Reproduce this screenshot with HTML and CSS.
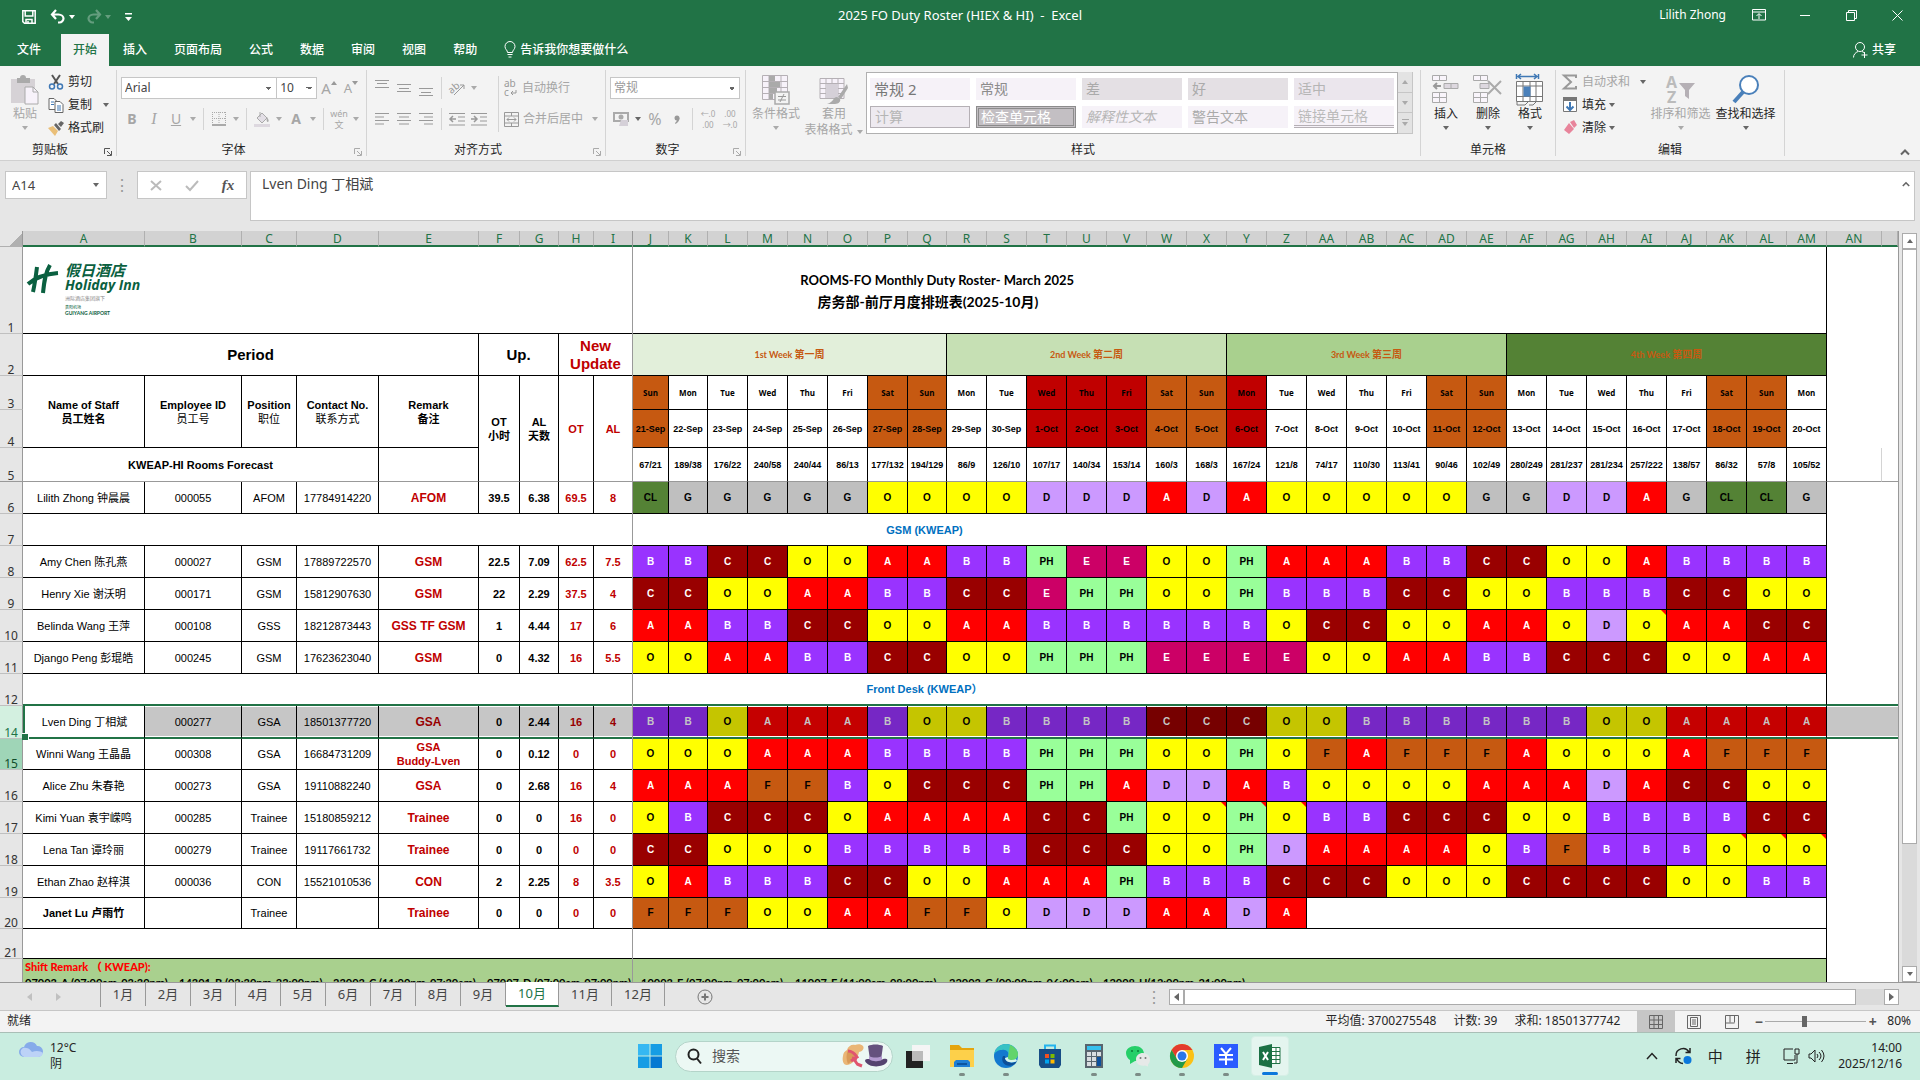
FILE: index.html
```html
<!DOCTYPE html>
<html lang="zh-CN">
<head>
    <meta charset="UTF-8">
    <meta name="viewport" content="width=device-width, initial-scale=1.0">
    <title>2025 FO Duty Roster (HIEX &amp; HI) - Excel</title>
    <link rel="stylesheet" href="styles.css">
</head>
<body>
    <header class="top">
        <div class="titlebar">
            <div class="quick">
                <button aria-label="保存"><svg width="14" height="14" viewBox="0 0 14 14"><path d="M.8.8h12.4v12.4H2.500L.8 11.600z M3.200 1v5h7.600V1 M4 13V9.500h6V13 M6 11v2" fill="none" stroke="#fff" stroke-width="1.500"/></svg></button>
                <button class="undo" aria-label="撤消"><svg width="16" height="14" viewBox="0 0 16 14"><path d="M6 0L2 4.500L6 9 M2.500 4.500h6c3 0 5 2 5 4s-2 4-4 4H8" fill="none" stroke="#fff" stroke-width="2.200"/></svg></button>
                <button class="drop light" aria-label="撤消选项"></button>
                <button class="undo faded" aria-label="恢复"><svg width="16" height="14" viewBox="0 0 16 14"><path d="M10 0l4 4.500L10 9 M13.500 4.500h-6c-3 0-5 2-5 4s2 4 4 4H8" fill="none" stroke="#fff" stroke-width="2.200"/></svg></button>
                <button class="drop light faded" aria-label="恢复选项"></button>
                <button class="more" aria-label="自定义"><svg width="7" height="8" viewBox="0 0 7 8"><path d="M0 0h7v1.500H0z M0 4h7L3.500 8z" fill="#fff"/></svg></button>
            </div>
            <h1>2025 FO Duty Roster (HIEX &amp; HI)&nbsp; -&nbsp; Excel</h1>
            <div class="window">
                <span class="user">Lilith Zhong</span>
                <button aria-label="功能区显示选项"><svg width="14" height="12" viewBox="0 0 14 12"><path d="M.5.5h13v10.500H.5z M.5 3h13 M7 10V5 M4.500 7L7 4.500L9.500 7" fill="none" stroke="#fff"/></svg></button>
                <button aria-label="最小化"><svg width="10" height="10" viewBox="0 0 10 10"><path d="M0 5.500h10" stroke="#fff"/></svg></button>
                <button aria-label="还原"><svg width="11" height="11" viewBox="0 0 11 11"><path d="M.5 2.500h8v8h-8z M2.500 2.500v-2h8v8h-2" fill="none" stroke="#fff"/></svg></button>
                <button aria-label="关闭"><svg width="11" height="11" viewBox="0 0 11 11"><path d="M.5.5l10 10 M10.500.5l-10 10" stroke="#fff"/></svg></button>
            </div>
        </div>
        <nav class="menu">
            <button class="file">文件</button>
            <button class="active">开始</button>
            <button>插入</button>
            <button>页面布局</button>
            <button>公式</button>
            <button>数据</button>
            <button>审阅</button>
            <button>视图</button>
            <button>帮助</button>
            <button class="tell"><svg width="12" height="17" viewBox="0 0 12 17"><path d="M3.500 11.500C3.500 9 1 8.500 1 5.500a5 5 0 0 1 10 0c0 3-2.500 3.500-2.500 6z M3.500 13.500h5 M4.500 16h3" fill="none" stroke="#fff"/></svg>告诉我你想要做什么</button>
            <button class="share"><svg width="15" height="16" viewBox="0 0 15 16"><circle cx="7" cy="5" r="4.500" fill="none" stroke="#fff"/><path d="M.5 15.500c0-3 2-5 4.500-6 M9 9.500l2 1 M11.500 10v6 M8.500 13h6" fill="none" stroke="#fff"/></svg>共享</button>
        </nav>
    </header>

    <section class="ribbon">
        <div class="group clipboard">
            <div class="tools">
                <button class="big off"><svg width="28" height="30" viewBox="0 0 28 30"><path d="M0 4h24v24H0z" fill="#d6d2d6"/><path d="M6 3h3a3 3 0 0 1 6 0h4v5H6z" fill="#aaa"/><path d="M14 12h8l5 5v12H14z" fill="#f7f2fa" stroke="#aaa"/><path d="M22 12v5h5" fill="none" stroke="#aaa"/></svg><span>粘贴</span><i class="drop"></i></button>
                <div class="stack">
                    <button><svg width="16" height="16" viewBox="0 0 16 16"><path d="M4 1l6 9 M12 1L6 10" stroke="#555" stroke-width="2"/><circle cx="4" cy="12.500" r="2.500" fill="none" stroke="#3f78b5" stroke-width="1.500"/><circle cx="12" cy="12.500" r="2.500" fill="none" stroke="#3f78b5" stroke-width="1.500"/></svg>剪切</button>
                    <button><svg width="16" height="16" viewBox="0 0 16 16"><path d="M1 1.500h5l3 3v8H1z" fill="#fff" stroke="#666"/><path d="M7 4.500h5l3 3v8H7z" fill="#fff" stroke="#666"/><path d="M3 5h3 M3 7.500h3 M9 9h4 M9 11h4 M9 13h4" stroke="#3f78b5"/></svg>复制<i class="drop dark"></i></button>
                    <button><svg width="16" height="16" viewBox="0 0 16 16"><path d="M0 8l5-2l5 5l-3 5z" fill="#eabf78"/><path d="M6 5l2-2l5 6l-2 2z M10 4l3-3l3 2l-3 4z" fill="#666"/></svg>格式刷</button>
                </div>
            </div>
            <p>剪贴板</p><svg class="launch on" width="8" height="8" viewBox="0 0 8 8"><path d="M.5 6V.5H6 M3 3l4 4 M7.500 3v4.500H3" fill="none" stroke="currentColor"/></svg>
        </div>

        <div class="group font">
            <div class="tools rows">
                <div class="line">
                    <select class="face" aria-label="字体"><option>Arial</option></select>
                    <select class="size" aria-label="字号"><option>10</option></select>
                    <button class="tool off up" aria-label="增大字号">A<svg width="6" height="4" viewBox="0 0 6 4"><path d="M0 4L3 0l3 4z" fill="#999"/></svg></button>
                    <button class="tool off down" aria-label="减小字号">A<svg width="6" height="4" viewBox="0 0 6 4"><path d="M0 0h6L3 4z" fill="#999"/></svg></button>
                </div>
                <div class="line">
                    <button class="tool off"><b>B</b></button>
                    <button class="tool off serif"><em>I</em></button>
                    <button class="tool off"><u>U</u></button><i class="drop"></i><i class="sep"></i>
                    <button class="tool off" aria-label="边框"><svg width="14" height="14" viewBox="0 0 14 14"><path d="M.5 0v13 M7 0v13 M13.500 0v13 M0 .5h14 M0 6.500h14" stroke="#aaa" stroke-dasharray="1 1"/><path d="M0 13h14" stroke="#aaa" stroke-width="2"/></svg></button><i class="drop"></i><i class="sep"></i>
                    <button class="tool off" aria-label="填充颜色"><svg width="16" height="16" viewBox="0 0 16 16"><path d="M6 1v5 M3 7l5-5l5 5l-5 5z" fill="#e3dfe6" stroke="#aaa"/><path d="M13 6c2 3 2 4 1 5c-1 0-2-1-1-5z" fill="#aaa"/><path d="M0 13h16v3H0z" fill="#ddd8df"/></svg></button><i class="drop"></i>
                    <button class="tool off"><b>A</b></button><i class="drop"></i><i class="sep"></i>
                    <button class="tool off pinyin">wén<br>文</button><i class="drop"></i>
                </div>
            </div>
            <p>字体</p><svg class="launch" width="8" height="8" viewBox="0 0 8 8"><path d="M.5 6V.5H6 M3 3l4 4 M7.500 3v4.500H3" fill="none" stroke="currentColor"/></svg>
        </div>

        <div class="group align">
            <div class="tools">
                <div class="rows">
                    <div class="line">
                        <button class="tool off" aria-label="顶端对齐"><svg width="14" height="16" viewBox="0 0 14 16"><path d="M0 .5h14 M2 3.500h10 M0 7.500h14" stroke="#999"/></svg></button>
                        <button class="tool off" aria-label="垂直居中"><svg width="14" height="16" viewBox="0 0 14 16"><path d="M0 4.500h14 M2 8.500h10 M0 11.500h14" stroke="#999"/></svg></button>
                        <button class="tool off" aria-label="底端对齐"><svg width="14" height="16" viewBox="0 0 14 16"><path d="M0 8.500h14 M2 12.500h10 M0 15.500h14" stroke="#999"/></svg></button>
                        <i class="sep"></i>
                        <button class="tool off" aria-label="方向"><svg width="18" height="16" viewBox="0 0 18 16"><text x="0" y="11" font-size="10" fill="#999" transform="rotate(-40 6 8)">ab</text><path d="M6 15L16 5 M12 5h4v4" fill="none" stroke="#999"/></svg></button><i class="drop"></i>
                    </div>
                    <div class="line">
                        <button class="tool off" aria-label="左对齐"><svg width="14" height="12" viewBox="0 0 14 12"><path d="M0 .5h14 M0 4h9 M0 7.500h14 M0 11h9" stroke="#999"/></svg></button>
                        <button class="tool off" aria-label="居中"><svg width="14" height="12" viewBox="0 0 14 12"><path d="M0 .5h14 M2 4h10 M0 7.500h14 M2 11h10" stroke="#999"/></svg></button>
                        <button class="tool off" aria-label="右对齐"><svg width="14" height="12" viewBox="0 0 14 12"><path d="M0 .5h14 M5 4h9 M0 7.500h14 M5 11h9" stroke="#999"/></svg></button>
                        <i class="sep"></i>
                        <button class="tool off" aria-label="减少缩进"><svg width="16" height="13" viewBox="0 0 16 13"><path d="M0 .5h16 M9 4h7 M9 8h7 M0 12h16" stroke="#999"/><path d="M7 6H1 M4 3L1 6l3 3" fill="none" stroke="#999" stroke-width="1.500"/></svg></button>
                        <button class="tool off" aria-label="增加缩进"><svg width="16" height="13" viewBox="0 0 16 13"><path d="M0 .5h16 M9 4h7 M9 8h7 M0 12h16" stroke="#999"/><path d="M0 6h6 M3 3l3 3l-3 3" fill="none" stroke="#999" stroke-width="1.500"/></svg></button>
                    </div>
                </div>
                <i class="sep tall"></i>
                <div class="rows">
                    <button class="label off"><svg width="14" height="18" viewBox="0 0 14 18"><text x="0" y="8" font-size="10" fill="#999">ab</text><text x="0" y="17" font-size="10" fill="#999">c</text><path d="M12 11v3H7 M9 12l-2 2l2 2" fill="none" stroke="#999"/></svg>自动换行</button>
                    <button class="label off"><svg width="15" height="15" viewBox="0 0 15 15"><path d="M.5.5h14v14H.5z M.5 4h14 M.5 11h14 M7.500.5V4 M7.500 11v3.500 M3 7.500h9 M5 5.500l-2 2l2 2 M10 5.500l2 2l-2 2" fill="none" stroke="#999"/></svg>合并后居中<i class="drop"></i></button>
                </div>
            </div>
            <p>对齐方式</p><svg class="launch" width="8" height="8" viewBox="0 0 8 8"><path d="M.5 6V.5H6 M3 3l4 4 M7.500 3v4.500H3" fill="none" stroke="currentColor"/></svg>
        </div>

        <div class="group number">
            <div class="tools rows">
                <div class="line"><select class="format off" aria-label="数字格式"><option>常规</option></select></div>
                <div class="line">
                    <button class="tool off" aria-label="会计数字格式"><svg width="16" height="16" viewBox="0 0 16 16"><path d="M1 2h14v8H1z" fill="none" stroke="#aaa" stroke-width="2"/><circle cx="8" cy="6" r="2.500" fill="#aaa"/><path d="M8 9h7v6H6z" fill="#d5d0d8"/></svg></button><i class="drop dark"></i>
                    <button class="tool off big-text">%</button>
                    <button class="tool off" aria-label="千位分隔样式"><svg width="6" height="9" viewBox="0 0 6 9"><circle cx="3" cy="3" r="2.500" fill="#999"/><path d="M5.500 3c0 3-2 5-4 6l-.5-1c1-1 2-2 2-4z" fill="#999"/></svg></button><i class="sep"></i>
                    <button class="tool off digits">←.0<br>.00</button>
                    <button class="tool off digits">.00<br>→.0</button>
                </div>
            </div>
            <p>数字</p><svg class="launch" width="8" height="8" viewBox="0 0 8 8"><path d="M.5 6V.5H6 M3 3l4 4 M7.500 3v4.500H3" fill="none" stroke="currentColor"/></svg>
        </div>

        <div class="group styles">
            <div class="tools">
                <button class="big off"><svg width="28" height="30" viewBox="0 0 28 30"><path d="M.5.500h25v24H.5z M7 .5v24 M19 .5v24 M.5 6.500h25 M.5 12.500h25 M.5 18.500h25" fill="#f7f2fa" stroke="#b5b0b5"/><path d="M7 1h6v5H7z M7 7h11v5H7z M7 13h8v5H7z M7 19h4v5H7z" fill="#aaa"/><path d="M13 17h14v12H13z" fill="#f3f3f3" stroke="#aaa" stroke-width="1.500"/><path d="M16 21.500h8 M16 25h8 M22 19l-4 8" stroke="#999"/></svg><span>条件格式</span><i class="drop"></i></button>
                <button class="big off"><svg width="30" height="30" viewBox="0 0 30 30"><path d="M1 3.500h24v20H1z M7 3.500v20 M13 3.500v20 M19 3.500v20 M1 8.500h24 M1 13.500h24 M1 18.500h24" fill="#f7f2fa" stroke="#b5b0b5"/><path d="M7 9h12v14H7z" fill="#d5d0d8"/><path d="M28 9l-9 13l3 2L29 13z M18 22c-4 0-3 5-10 7h8c4 0 6-3 5-5z" fill="#aaa"/></svg><span>套用<br>表格格式 <i class="drop"></i></span></button>
                <div class="gallery">
                    <button class="s-large">常规 2</button><button>常规</button><button class="s-bad">差</button><button class="s-bad">好</button><button class="s-neutral">适中</button>
                    <button class="s-calc">计算</button><button class="s-check">检查单元格</button><button class="s-note">解释性文本</button><button class="s-warn">警告文本</button><button class="s-link">链接单元格</button>
                </div>
                <div class="gallery-scroll"><button aria-label="上一行"><i class="drop flip"></i></button><button aria-label="下一行"><i class="drop"></i></button><button aria-label="其他"><i class="drop bar-top"></i></button></div>
            </div>
            <p>样式</p>
        </div>

        <div class="group cells">
            <div class="tools">
                <button class="big"><svg width="28" height="30" viewBox="0 0 28 30"><path d="M.5.5h14v5H.5z M7.500.5v5 M.5 17.500h14v10H.5z M7.500 17.500v10 M.5 22.500h14" fill="#f9f5fb" stroke="#aaa"/><path d="M12 8.500h14v5H12z M19 8.500v5" fill="#ddd8df" stroke="#aaa"/><path d="M9 11H2 M5 8l-3 3l3 3" fill="none" stroke="#999" stroke-width="2"/></svg><span>插入</span><i class="drop dark"></i></button>
                <button class="big"><svg width="30" height="30" viewBox="0 0 30 30"><path d="M.5.5h14v5H.5z M7.500.5v5 M.5 17.500h14v10H.5z M7.500 17.500v10 M.5 22.500h14" fill="#f9f5fb" stroke="#aaa"/><path d="M7 8.500h9v5H7z" fill="#ddd8df" stroke="#aaa"/><path d="M15 6l13 13 M28 6L15 19" stroke="#aaa" stroke-width="2"/></svg><span>删除</span><i class="drop dark"></i></button>
                <button class="big"><svg width="28" height="32" viewBox="0 0 28 32"><path d="M.5 0v5 M22.500 0v5 M2 2.500h19 M5 0L2 2.500L5 5 M18 0l3 2.500L18 5" fill="none" stroke="#3f78b5" stroke-width="1.500"/><path d="M.5 7.500h26v20H.5z M7 7.500v20 M14 7.500v20 M20 7.500v20 M.5 12h26 M.5 22.500h26" fill="#fff" stroke="#777"/><path d="M7.500 12.500h7v10h-7z" fill="#4a80ba"/><path d="M1 28v3h8l3-3 M13 31h4l3-3" fill="none" stroke="#777"/></svg><span>格式</span><i class="drop dark"></i></button>
            </div>
            <p>单元格</p>
        </div>

        <div class="group editing">
            <div class="tools">
                <div class="stack">
                    <button class="off"><svg width="16" height="16" viewBox="0 0 16 16"><path d="M14 4V1.500H2L9 8l-7 6.500h12V12" fill="none" stroke="#999" stroke-width="2"/></svg>自动求和<i class="drop dark far"></i></button>
                    <button><svg width="16" height="16" viewBox="0 0 16 16"><path d="M1.500 1.500h13v13h-13z" fill="#fff" stroke="#777"/><path d="M1 0h14v4H1z" fill="#777"/><path d="M8 5v8 M4.500 9.500L8 13l3.500-3.500" fill="none" stroke="#3f78b5" stroke-width="2"/></svg>填充<i class="drop dark"></i></button>
                    <button><svg width="16" height="16" viewBox="0 0 16 16"><path d="M8 2l4-2l3 5l-3 3z M7 3l5 6l-5 5l-5-4z" fill="#e8849b"/></svg>清除<i class="drop dark"></i></button>
                </div>
                <button class="big off"><svg width="30" height="30" viewBox="0 0 30 30"><text x="0" y="13" font-size="16" fill="#bbb" font-weight="bold">A</text><text x="1" y="28" font-size="16" fill="#bbb" font-weight="bold">Z</text><path d="M13 8h16l-6 7v9l-4-3v-6z" fill="#b5b0b5"/></svg><span>排序和筛选</span><i class="drop"></i></button>
                <button class="big"><svg width="28" height="30" viewBox="0 0 28 30"><circle cx="17" cy="10" r="9" fill="#fff" stroke="#4a80ba" stroke-width="2"/><path d="M11 17L2 27" stroke="#4a80ba" stroke-width="4"/></svg><span>查找和选择</span><i class="drop dark"></i></button>
            </div>
            <p>编辑</p>
        </div>
        <button class="collapse" aria-label="折叠功能区"><svg width="10" height="6" viewBox="0 0 10 6"><path d="M1 5.500L5 1.500l4 4" fill="none" stroke="#666" stroke-width="2"/></svg></button>
    </section>

    <section class="formula">
        <label class="namebox"><input type="text" value="A14" aria-label="名称框"><i class="drop dark"></i></label>
        <span class="dots">⋮</span>
        <div class="entry">
            <button aria-label="取消"><svg width="12" height="11" viewBox="0 0 12 11"><path d="M1 1l10 9 M11 1L1 10" stroke="#bbb" stroke-width="2"/></svg></button>
            <button aria-label="输入"><svg width="14" height="11" viewBox="0 0 14 11"><path d="M1 6l4 4l8-9" fill="none" stroke="#bbb" stroke-width="2"/></svg></button>
            <button class="fx" aria-label="插入函数">fx</button>
        </div>
        <div class="bar">
            <textarea aria-label="编辑栏">Lven Ding 丁相斌</textarea>
            <svg width="8" height="6" viewBox="0 0 10 6"><path d="M1 5.500L5 1.500l4 4" fill="none" stroke="#666" stroke-width="2"/></svg>
        </div>
    </section>

    <main class="work">
        <div class="sheet">
            <table>
                <colgroup>
                    <col class="c-no"><col class="c-a"><col class="c-b"><col class="c-c"><col class="c-d"><col class="c-e"><col class="c-f"><col class="c-g"><col class="c-h"><col class="c-i">
                    <col class="c-j"><col class="c-k"><col class="c-day" span="5"><col class="c-q"><col class="c-day" span="22"><col class="c-an"><col>
                </colgroup>
                <thead><tr id="letters"><th class="corner"></th></tr></thead>
                <tbody>
                    <tr class="r1"><th>1</th>
                        <td colspan="39" class="heading">
                            <svg class="logo" width="120" height="58" viewBox="0 0 120 58">
                                <path d="M10 2C9 10 8 18 6 27 M23 0C18 8 17 18 16 28 M1 19c7-6 16-10 30-11" fill="none" stroke="#0a6040" stroke-width="4"/>
                                <text x="38" y="11" font-size="15" class="logo-zh">假日酒店</text>
                                <text x="38" y="25" font-size="14" class="logo-en">Holiday Inn</text>
                                <text x="38" y="35" font-size="5" class="logo-sub" fill="#888">洲际酒店集团旗下</text>
                                <text x="38" y="44" font-size="4" class="logo-sub" fill="#0a6040">贵阳机场</text>
                                <text x="38" y="50" font-size="5" class="logo-air">GUIYANG AIRPORT</text>
                            </svg>
                            <span>&nbsp;&nbsp;&nbsp;&nbsp;&nbsp;&nbsp;&nbsp;&nbsp;ROOMS-FO Monthly Duty Roster- March 2025</span><br>&nbsp;&nbsp;房务部-前厅月度排班表(2025-10月)
                        </td><td class="out" colspan="2"></td></tr>
                    <tr class="r2"><th>2</th>
                        <td colspan="5" class="cap">Period</td><td colspan="2" class="cap">Up.</td><td colspan="2" class="cap red">New<br>Update</td>
                        <td colspan="8" class="week w1">1st Week <span>第一周</span></td><td colspan="7" class="week w2">2nd Week <span>第二周</span></td><td colspan="7" class="week w3">3rd Week <span>第三周</span></td><td colspan="8" class="week w4">4th Week <span>第四周</span></td>
                        <td class="out" colspan="2"></td></tr>
                    <tr class="r3" id="days"><th>3</th>
                        <td rowspan="2" class="head">Name of Staff<br>员工姓名</td><td rowspan="2" class="head thin">Employee ID<br><span>员工号</span></td><td rowspan="2" class="head thin">Position<br><span>职位</span></td><td rowspan="2" class="head thin">Contact No.<br><span>联系方式</span></td><td rowspan="2" class="head">Remark<br>备注</td>
                        <td rowspan="3" class="head freeze">OT<br>小时</td><td rowspan="3" class="head freeze">AL<br>天数</td><td rowspan="3" class="head red freeze">OT</td><td rowspan="3" class="head red freeze">AL</td></tr>
                    <tr class="r4" id="dates"><th>4</th></tr>
                    <tr class="r5" id="forecast"><th>5</th><td colspan="4" class="head">KWEAP-HI Rooms Forecast</td><td></td></tr>
                </tbody>
                <tbody id="manager"></tbody>
                <tbody><tr><th>7</th><td colspan="39" class="section">GSM (KWEAP)</td><td class="out" colspan="2"></td></tr></tbody>
                <tbody id="gsm"></tbody>
                <tbody><tr class="r12"><th>12</th><td colspan="39" class="section">Front Desk (KWEAP）</td><td class="out" colspan="2"></td></tr></tbody>
                <tbody id="desk"></tbody>
                <tbody>
                    <tr class="r21"><th>21</th><td colspan="39"></td><td class="out" colspan="2"></td></tr>
                    <tr class="r22"><th></th><td colspan="39" class="remark"><strong>Shift Remark （ KWEAP):</strong>
                        <div class="shifts"><span>07003-A (07:00am-03:30pm)</span><span>14301-B (03:30pm-23:00pm)</span><span>23003-C (11:00pm-07:30am)</span><span>07007-D (07:00am-07:00pm)</span><span>10003-E (07:00pm-07:00am)</span><span>11007-F (11:00am-08:00pm)</span><span>22003-G (00:00pm-06:00am)</span><span>12008-H(12:00pm-21:00pm)</span></div></td><td class="out" colspan="2"></td></tr>
                </tbody>
            </table>
            <i class="freeze-line"></i>
        </div>
        <div class="vscroll"><button aria-label="向上"><i class="drop flip dark"></i></button><div class="track"><div class="thumb"></div></div><button aria-label="向下"><i class="drop dark"></i></button></div>
    </main>

    <nav class="tabs">
        <div class="arrows"><i></i><i class="next"></i></div>
        <div class="months">
            <button>1月</button><button>2月</button><button>3月</button><button>4月</button><button>5月</button><button>6月</button><button>7月</button><button>8月</button><button>9月</button><button class="wide current">10月</button><button class="wide">11月</button><button class="wide">12月</button>
        </div>
        <button class="add" aria-label="新工作表"><svg width="16" height="16" viewBox="0 0 16 16"><circle cx="8" cy="8" r="7" fill="none" stroke="#777"/><path d="M8 4.500v7 M4.500 8h7" stroke="#777" stroke-width="2"/></svg></button>
        <span class="dots">⋮</span>
        <div class="hscroll"><button aria-label="向左"><i class="side left"></i></button><div class="track"><div class="thumb"></div></div><button aria-label="向右"><i class="side"></i></button></div>
    </nav>

    <footer class="status">
        <span class="ready">就绪</span>
        <span>平均值: 3700275548</span><span>计数: 39</span><span class="sum">求和: 18501377742</span>
        <div class="views">
            <button class="on" aria-label="普通"><svg width="14" height="14" viewBox="0 0 14 14"><path d="M.5.5h13v13H.5z M5 .5v13 M9.500.5v13 M.5 5h13 M.5 9.500h13" fill="none" stroke="#666"/></svg></button>
            <button aria-label="页面布局"><svg width="14" height="14" viewBox="0 0 14 14"><path d="M.5.5h13v13H.5z M3.500 2.500h7v9h-7z M5 5h4 M5 7h4 M5 9h4" fill="none" stroke="#666"/></svg></button>
            <button aria-label="分页预览"><svg width="14" height="14" viewBox="0 0 14 14"><path d="M.5.5h13v13H.5z M5 .5v7 M9.500.5v7 M1 8h8.500" fill="none" stroke="#666"/></svg></button>
        </div>
        <button class="zoom-step" aria-label="缩小">−</button><input type="range" min="10" max="400" value="160" aria-label="缩放"><button class="zoom-step" aria-label="放大">+</button>
        <span class="percent">80%</span>
    </footer>

    <footer class="taskbar">
        <div class="weather">
            <svg width="26" height="18" viewBox="0 0 26 18"><path d="M6 17a5 5 0 0 1 0-10a7 7 0 0 1 13-1a5.500 5.500 0 0 1 1 11z" fill="#86abea"/><path d="M6 17a5 5 0 0 1-1-9c6-1 8 3 9 4c4-2 9-1 11 1c-1 3-3 4-5 4z" fill="#bcd2f7"/></svg>
            <span>12°C<br>阴</span>
        </div>
        <div class="apps">
            <button aria-label="开始"><svg width="24" height="24" viewBox="0 0 24 24"><path d="M0 0h11.500v11.500H0z" fill="#35b8f2"/><path d="M12.500 0H24v11.500H12.500z M0 12.500h11.500V24H0z" fill="#169de4"/><path d="M12.500 12.500H24V24H12.500z" fill="#0679d2"/></svg></button>
            <label class="search">
                <svg width="15" height="16" viewBox="0 0 15 16"><circle cx="6.500" cy="6.500" r="5" fill="none" stroke="#222" stroke-width="2"/><path d="M10 10.500l4 5" stroke="#222" stroke-width="2"/></svg>
                <input type="text" placeholder="搜索">
                <svg width="46" height="24" viewBox="0 0 46 24"><path d="M1 12c0-3 2-5 4-6c1-4 5-6 8-5c3-1 6-1 8 1c2 3-2 6-4 6c-1 6-6 12-12 13c-4 0-5-5-4-9z" fill="#eab676"/><path d="M6 6c3 0 8 3 9 6c-3 3-6 6-9 8c-2-4-2-10 0-14z" fill="#d99a58"/><path d="M6 7c4 0 7 3 9 6l-6 4 M10 14l5 1 M11 14l5 7 M15 20l5 2" fill="none" stroke="#e0556f" stroke-width="3"/><path d="M26 2c4-2 11-2 15 0l-2 14H28z" fill="#65527e"/><path d="M27 12c4 2 9 2 13 0v4c-4 2-9 2-13 0z" fill="#b39ad0"/><path d="M23 17c0-2 2-2 4-2c3 3 11 3 14 0c4-1 5 0 4 3c-4 6-19 6-22-1z" fill="#55436f"/></svg>
            </label>
            <button aria-label="任务视图"><svg width="24" height="24" viewBox="0 0 24 24"><path d="M0 7h17v17H0z" fill="#222"/><path d="M6 1h18v16H6z" fill="#f5f5f5"/><path d="M6 7h11v10H6z" fill="#bbb"/></svg></button>
            <button class="run" aria-label="文件资源管理器"><svg width="24" height="24" viewBox="0 0 24 24"><path d="M0 1h9l3 3h12v19H0z" fill="#e5a50d"/><path d="M0 6h24v17H0z" fill="#fdd04a"/><path d="M4 23v-5l2-2h12l2 2v5z" fill="#1f7fd4"/><path d="M7 19h10v2H7z" fill="#0c55a0"/></svg></button>
            <button class="run" aria-label="Edge"><svg width="24" height="24" viewBox="0 0 24 24"><circle cx="12" cy="12" r="12" fill="#1479cf"/><path d="M0 11C1 4 6 0 12 0s12 5 12 10c0 4-3 6-6 6c-3 0-5-1-4-3c2-5-2-8-6-7c-4 0-7 2-8 5z" fill="#37c2c4"/><path d="M16 1c5 2 8 6 8 9c0 4-3 6-6 6c-3 0-5-1-4-3z" fill="#62d46b"/><path d="M9 12c-3 6 3 12 10 9c2-1 3-2 4-4c-6 4-11 1-12-5z" fill="#0d4f98"/><path d="M14 13c-1 3 4 4 8 2l1 2c-5 3-12 1-12-3z" fill="#d9f4ec"/></svg></button>
            <button aria-label="Microsoft Store"><svg width="24" height="24" viewBox="0 0 24 24"><path d="M7 6V1.500h10V6" fill="none" stroke="#25b5ee" stroke-width="2"/><path d="M1 5h22v16l-2 3H3l-2-3z" fill="#174d86"/><path d="M7 10h4v4H7z" fill="#f25022"/><path d="M12.500 10h4v4h-4z" fill="#7fba00"/><path d="M7 15.500h4v4H7z" fill="#00a4ef"/><path d="M12.500 15.500h4v4h-4z" fill="#ffb900"/></svg></button>
            <button class="run" aria-label="计算器"><svg width="18" height="24" viewBox="0 0 18 24"><path d="M0 0h18v24H0z" fill="#59656e"/><path d="M2 2h14v4H2z" fill="#35c1ee"/><path d="M2 8h4v4H2z M7 8h4v4H7z M12 8h4v4h-4z M2 13h4v4H2z M7 13h4v4H7z M2 18h4v4H2z M7 18h4v4H7z" fill="#d9dde0"/><path d="M12 13h4v9h-4z" fill="#0d509c"/></svg></button>
            <button class="run" aria-label="微信"><svg width="24" height="24" viewBox="0 0 24 24"><path d="M9 2c5 0 9 3 9 8s-4 7-9 7l-5 3v-4c-2-1-4-4-4-7c0-4 4-7 9-7z" fill="#25cf68"/><circle cx="6" cy="7" r="1" fill="#0b7c38"/><circle cx="12" cy="7" r="1" fill="#0b7c38"/><path d="M17 9c4 0 7 3 7 6.500c0 2-1 4-2 5v2l-3-1c-5 1-9-2-9-6S13 9 17 9z" fill="#e6e9e8"/><circle cx="14.500" cy="14" r="1" fill="#777"/><circle cx="19.500" cy="14" r="1" fill="#777"/></svg></button>
            <button class="run" aria-label="Chrome"><svg width="24" height="24" viewBox="0 0 24 24"><circle cx="12" cy="12" r="12" fill="#fbc116"/><path d="M1.600 6A12 12 0 0 1 22.400 6H12L7 15z" fill="#e33b2e"/><path d="M1.600 6A12 12 0 0 0 12 24l5.200-9H7z" fill="#229a49"/><circle cx="12" cy="12" r="6" fill="#fff"/><circle cx="12" cy="12" r="4.500" fill="#2a76e8"/></svg></button>
            <button class="run" aria-label="财务"><svg width="24" height="24" viewBox="0 0 24 24"><path d="M0 0h24v24H0z" fill="#2b5cff"/><path d="M7 4l5 6l5-6 M5 11h14 M5 15.500h14 M12 10v11" fill="none" stroke="#fff" stroke-width="2"/></svg></button>
            <button class="run front" aria-label="Excel"><svg width="22" height="24" viewBox="0 0 22 24"><path d="M12 3.500h9v16h-9 M12 7.500h9 M12 11.500h9 M12 15.500h9 M17 3.500v16" fill="#fff" stroke="#217346"/><path d="M0 3l13-3v24L0 21z" fill="#1b7044"/><path d="M4 8l5 8 M9 8l-5 8" stroke="#fff" stroke-width="2"/></svg></button>
        </div>
        <div class="tray">
            <svg width="12" height="8" viewBox="0 0 12 8"><path d="M1 7l5-5.500L11 7" fill="none" stroke="#222" stroke-width="1.500"/></svg>
            <svg class="sync" width="17" height="17" viewBox="0 0 17 17"><path d="M1 8a7 7 0 0 1 13-4 M15 0v4.500h-4.500 M8 15.500A7 7 0 0 1 2 11 M1 15v-4.500h4.500" fill="none" stroke="#222" stroke-width="1.500"/><circle cx="12.500" cy="12" r="4" fill="#0b78dc"/></svg>
            <span class="ime">中</span><span class="ime">拼</span>
            <svg class="net" width="17" height="16" viewBox="0 0 17 16"><path d="M10 1H1v11h11V7 M4 15.500h6 M12 1h4v5h-4z M14 6v9h-3" fill="none" stroke="#222"/></svg>
            <svg width="17" height="14" viewBox="0 0 17 14"><path d="M1 5h2l4-4v12L3 9H1z M9 5q2 2 0 4 M11 3q4 4 0 8 M13.500 1q5 6 0 12" fill="none" stroke="#222"/></svg>
            <time>14:00<br>2025/12/16</time>
        </div>
    </footer>
    <script src="script.js"></script>
</body>
</html>
```
FILE: styles.css
```css
* {
    box-sizing: border-box;
}

body {
    display: flex;
    flex-direction: column;
    height: 100vh;
    margin: 0;
    overflow: hidden;
    background-color: #e6e6e6;
    color: #262626;
    font-family: "Noto Sans", "Noto Sans CJK SC", sans-serif;
    font-size: 12px;
    line-height: 16px;
}

button, input, select, textarea {
    margin: 0;
    padding: 0;
    border: 0;
    background: none;
    color: inherit;
    font: inherit;
}

button {
    display: flex;
    align-items: center;
    justify-content: center;
    white-space: nowrap;
}

svg {
    flex: none;
    overflow: visible;
}

p, h1 {
    margin: 0;
}

/* small triangle for drop-downs */
.drop {
    display: flex;
    flex: none;
    align-items: center;
    justify-content: center;
    width: 12px;
    color: #aaa;
}

.drop::before {
    content: "";
    border: 3px solid transparent;
    border-top: 4px solid currentColor;
    border-bottom: 0;
}

.drop.dark {
    color: #666;
}

.drop.light {
    color: #fff;
}

.drop.flip::before {
    border-top: 0;
    border-bottom: 4px solid currentColor;
}

.drop.bar-top {
    height: 9px;
    width: 7px;
    border-top: 1px solid #aaa;
}

.faded {
    opacity: 0.3;
}

/* title bar and menu */
.top {
    background-color: #217346;
    color: #fff;
}

.titlebar {
    display: grid;
    grid-template-columns: 1fr auto 1fr;
    align-items: center;
    height: 34px;
}

.quick {
    display: flex;
    align-items: center;
    padding-left: 22px;
}

.quick .undo {
    margin-left: 14px;
}

.quick .faded {
    margin-left: 8px;
}

.quick .faded.drop {
    margin-left: 0;
}

.quick .more {
    margin-left: 11px;
}

.titlebar h1 {
    font-size: 13px;
    font-weight: 400;
    padding-bottom: 4px;
}

.window {
    display: flex;
    align-items: center;
    justify-content: flex-end;
    padding-bottom: 4px;
}

.window button {
    width: 46px;
}

.user {
    margin-right: 10px;
}

.menu {
    display: flex;
    height: 32px;
}

.menu button {
    padding: 0 13px 1px 14px;
    font-weight: 500;
}

.menu .file {
    padding: 0 20px 1px 17px;
}

.menu .active {
    padding: 0 12px 1px;
    background-color: #f3f3f3;
    color: #217346;
}

.menu .tell {
    gap: 4px;
}

.menu .share {
    gap: 4px;
    margin-left: auto;
    padding: 0 24px 1px;
}

/* ribbon */
.ribbon {
    display: flex;
    flex: none;
    height: 95px;
    padding: 4px 0;
    border-bottom: 1px solid #d0d0d0;
    background-color: #f3f3f3;
}

.group {
    position: relative;
    flex: none;
    border-right: 1px solid #d4d4d4;
}

.group p {
    text-align: center;
    line-height: 20px;
}

.clipboard p, .font p, .align p, .number p {
    padding-right: 16px;
}

.launch {
    position: absolute;
    right: 4px;
    bottom: 0;
    color: #aaa;
}

.launch.on {
    color: #555;
}

.clipboard { width: 117px; }
.font { width: 250px; }
.align { width: 239px; }
.number { width: 140px; }
.styles { width: 675px; }
.cells { width: 135px; }
.editing { width: 229px; }

.tools {
    display: flex;
    height: 70px;
    padding: 0 4px;
}

.rows {
    display: flex;
    flex-direction: column;
    gap: 9px;
    padding-top: 7px;
}

.line {
    display: flex;
    height: 22px;
}

.off {
    color: #a6a6a6;
}

.tool {
    flex: none;
    width: 22px;
    font-size: 14px;
}

.tool.up svg, .tool.down svg {
    align-self: flex-start;
    margin-top: 4px;
}

.tool.up {
    margin-left: 1px;
    font-size: 15px;
}

.tool.down {
    font-size: 13px;
}

.serif {
    font-family: "Liberation Serif", serif;
    font-size: 16px;
}

.pinyin {
    font-size: 9px;
    line-height: 11px;
}

.digits {
    font-size: 8px;
    line-height: 11px;
}

.big-text {
    font-size: 16px;
}

.sep {
    flex: none;
    width: 1px;
    margin: 0 4px;
    background-color: #d4d4d4;
}

.sep.tall {
    margin: 6px 5px 8px 8px;
}

.label {
    height: 22px;
    gap: 4px;
    justify-content: flex-start;
}

.label .drop {
    margin-left: 2px;
}

select {
    appearance: none;
    height: 22px;
    padding: 0 3px;
    border: 1px solid #c6c6c6;
    background-color: #fff;
    background-image: linear-gradient(45deg, transparent 50%, #666 50%), linear-gradient(-45deg, transparent 50%, #666 50%);
    background-position: right 7px center, right 4px center;
    background-size: 3px 3px;
    background-repeat: no-repeat;
    color: #444;
}

.face { width: 157px; }
.size { width: 40px; border-left: 0; }
.format { width: 130px; color: #999; }

.big {
    flex-direction: column;
    justify-content: flex-start;
    width: 42px;
    padding-top: 4px;
}

.big svg {
    height: 32px;
}

.big .drop {
    height: 12px;
}

.big span .drop {
    display: inline-flex;
    width: 8px;
}

.clipboard .big {
    width: 43px;
}

.styles .big {
    width: 58px;
}

.styles .tools {
    padding: 0 0 0 1px;
}

.stack {
    display: flex;
    flex-direction: column;
    align-items: flex-start;
    width: 88px;
    line-height: 23px;
}

.stack button {
    gap: 4px;
    height: 23px;
}

.clipboard .stack {
    width: 66px;
    padding-left: 2px;
}

.clipboard .stack .drop {
    margin-left: 4px;
}

.editing .stack {
    padding-left: 2px;
}

.editing .stack .drop {
    margin-left: -4px;
}

.editing .stack .far {
    margin-left: 3px;
}

.editing .big {
    width: 65px;
}

.gallery {
    display: grid;
    grid-template-columns: repeat(5, 100px);
    grid-template-rows: 22px 22px;
    gap: 6px;
    height: 62px;
    margin: 2px 0 0 3px;
    padding: 5px 3px;
    border: 1px solid #b0b0b0;
    background-color: #fff;
}

.gallery button {
    justify-content: flex-start;
    padding-left: 4px;
    background-color: #f6f2f8;
    color: #8c8c8c;
    font-size: 14px;
}

.gallery .s-large { font-size: 15px; color: #777; }
.gallery .s-bad { background-color: #e4e0e4; color: #aaa; }
.gallery .s-neutral { background-color: #ebe6ed; color: #b5b5b5; }
.gallery .s-calc { border: 1px solid #b5b0b5; background-color: #eeeaf0; color: #b5b5b5; }
.gallery .s-check { border: 3px double #8c8c8c; background-color: #c3bfc3; color: #fff; padding-left: 2px; }
.gallery .s-note { font-style: italic; color: #b5b5b5; }
.gallery .s-warn { color: #aaa; }
.gallery .s-link { border-bottom: 3px double #b5b0b5; color: #bbb; }

.gallery-scroll {
    display: flex;
    flex-direction: column;
    width: 15px;
    height: 62px;
    margin-top: 2px;
}

.gallery-scroll button {
    flex: 1;
    border: 1px solid #c6c6c6;
    border-left: 0;
    border-top: 0;
    background-color: #e3e3e3;
}

.collapse {
    align-self: flex-end;
    margin: 0 10px 0 auto;
    padding-bottom: 1px;
}

/* formula bar */
.formula {
    display: flex;
    flex: none;
    align-items: flex-start;
    height: 70px;
    padding: 10px 5px 0;
}

.namebox {
    display: flex;
    width: 102px;
    height: 28px;
    padding: 0 4px 0 6px;
    border: 1px solid #c6c6c6;
    background-color: #fff;
    color: #444;
    font-size: 13px;
}

.namebox input {
    flex: 1;
    min-width: 0;
}

.dots {
    width: 30px;
    color: #999;
    font-size: 16px;
    line-height: 28px;
    text-align: center;
}

.entry {
    display: flex;
    width: 110px;
    height: 28px;
    border: 1px solid #c6c6c6;
    background-color: #fff;
}

.entry button {
    flex: 1;
}

.entry .fx {
    font: italic bold 15px "Liberation Serif", serif;
    color: #555;
}

.bar {
    display: flex;
    flex: 1;
    height: 50px;
    margin-left: 3px;
    padding: 2px 4px 0 11px;
    border: 1px solid #c6c6c6;
    background-color: #fff;
}

.bar textarea {
    flex: 1;
    resize: none;
    color: #444;
    font-size: 14px;
    line-height: 20px;
}

.bar svg {
    margin-top: 7px;
}

/* sheet */
.work {
    display: flex;
    flex: 1;
    min-height: 0;
    border-bottom: 1px solid #999;
}

.sheet {
    position: relative;
    flex: 1;
    overflow: hidden;
    border-right: 1px solid #999;
    background-color: #fff;
}

table {
    width: 100%;
    table-layout: fixed;
    border-spacing: 0;
    color: #000;
    font-family: "Liberation Sans", "Noto Sans CJK SC", sans-serif;
    font-size: 11px;
    line-height: 14px;
}

.c-no { width: 23px; }
.c-a { width: 122px; }
.c-b { width: 97px; }
.c-c { width: 55px; }
.c-d { width: 82px; }
.c-e { width: 100px; }
.c-f { width: 41px; }
.c-g, .c-i, .c-k, .c-q { width: 39px; }
.c-h { width: 35px; }
.c-j { width: 36px; }
.c-day { width: 40px; }
.c-an { width: 55px; }

td, th {
    padding: 0;
    white-space: nowrap;
}

tr {
    height: 32px;
}

td {
    border-right: 1px solid #000;
    border-bottom: 1px solid #000;
    text-align: center;
    vertical-align: middle;
}

td.out {
    border: 0;
}

thead tr {
    height: 16px;
}

thead th {
    padding-top: 2px;
    border-right: 1px solid #b0b0b0;
    border-bottom: 2px solid #217346;
    background-color: #d2d2d2;
    color: #217346;
    font: 12px/12px "Noto Sans", sans-serif;
}

thead .corner {
    border-right-color: #999;
    border-bottom: 1px solid #b0b0b0;
    background: linear-gradient(135deg, #e6e6e6 65%, #b0b0b0 65%);
}

tbody th {
    border-right: 1px solid #999;
    border-bottom: 1px solid #c0c0c0;
    background-color: #e6e6e6;
    color: #333;
    font: 12px/11px "Noto Sans", sans-serif;
    vertical-align: bottom;
}

.r1 { height: 87px; }
.r2 { height: 42px; }
.r3 { height: 34px; }
.r4 { height: 38px; }
.r5 { height: 34px; }
.r14 { height: 33px; }
.r15, .r20 { height: 31px; }
.r21 { height: 30px; }
.r22 { height: 40px; }

.r5 td, .r5 th, td.freeze {
    border-bottom-color: #999;
}

.r5 .out {
    border-bottom: 1px solid #999;
}

.r5 .an {
    border-right: 1px solid #d4d4d4;
}

.heading {
    position: relative;
    font: bold 14px/21px Lato, "Noto Sans CJK SC", sans-serif;
}

.heading span {
    font-size: 13px;
}

.logo {
    position: absolute;
    left: 4px;
    top: 18px;
}

.logo-zh {
    font-family: "Noto Sans CJK SC", sans-serif;
    font-style: italic;
    fill: #0a6040;
}

.logo-en {
    font-family: "Open Sans", sans-serif;
    font-style: italic;
    fill: #0a6040;
}

.logo-sub {
    font-weight: 400;
}

.logo-air {
    fill: #0a6040;
}

.cap {
    font-size: 15px;
    line-height: 18px;
    font-weight: bold;
}

.head {
    font-weight: bold;
}

.head.thin span {
    font-weight: 400;
}

.red {
    color: #c00000;
}

.week {
    color: #c65911;
    font: bold 9px/14px Lato, "Noto Sans CJK SC", sans-serif;
}

.week span {
    font-size: 10px;
}

.w1 { background-color: #e2efda; }
.w2 { background-color: #c6e0b4; }
.w3 { background-color: #a9d08e; }
.w4 { background-color: #548235; }

.day {
    font: bold 8px/12px "Open Sans", sans-serif;
}

.date, .rooms {
    font-size: 9px;
    font-weight: bold;
}

.weekend { background-color: #c65911; }
.holiday { background-color: #c00000; }

.section {
    color: #0070c0;
    font-weight: bold;
}

.role {
    color: #c00000;
    font-size: 12px;
    font-weight: bold;
}

.role.two {
    font-size: 11px;
}

.num, .strong {
    font-weight: bold;
}

.shift {
    position: relative;
    font-size: 10px;
    font-weight: bold;
}

.A { background-color: #f00; color: #fff; }
.B { background-color: #93f; color: #fff; }
.C { background-color: #900; color: #fff; }
.D { background-color: #c9f; }
.E { background-color: #c06; color: #fff; }
.F { background-color: #c65911; }
.G { background-color: #bfbfbf; }
.O { background-color: #ff0; }
.PH { background-color: #9f9; }
.CL { background-color: #548235; }

/* comment marker in the cell's corner */
.note::after {
    content: "";
    position: absolute;
    top: 0;
    right: 0;
    border-top: 5px solid #f00;
    border-left: 5px solid transparent;
}

/* selected row */
.r12 td {
    border-bottom: 2px solid #217346;
}

.r14 td {
    border-bottom: 2px solid #217346;
    background-color: #c6c6c6;
    box-shadow: inset 0 1px #fff, inset 0 -1px #fff;
}

.r14 .A { background-color: #c50000; color: #c5c5c5; }
.r14 .B { background-color: #7627c5; color: #c5c5c5; }
.r14 .C { background-color: #760000; color: #c5c5c5; }
.r14 .O { background-color: #c5c500; }
.r14 .role, .r14 .red { color: #980000; }

.r14 td.name {
    position: relative;
    border-left: 2px solid #217346;
    background-color: #fff;
}

/* fill handle */
.r14 .name::after {
    content: "";
    position: absolute;
    left: -3px;
    bottom: -3px;
    width: 6px;
    height: 6px;
    border: 1px solid #fff;
    border-width: 1px 1px 0 0;
    background-color: #217346;
}

.r14 th {
    background-color: #d3f0e0;
    color: #217346;
}

.r15 th {
    background-color: #9fd5b7;
    color: #0f4d2b;
}

.remark {
    background-color: #a9d08e;
    border-bottom: 0;
    padding: 0 2px;
    font: bold 11px/16px Lato, "Noto Sans CJK SC", sans-serif;
    text-align: left;
    vertical-align: top;
}

.remark strong {
    color: #f00;
}

.shifts {
    display: flex;
}

.shifts span {
    width: 154px;
}

.freeze-line {
    position: absolute;
    top: 0;
    bottom: 0;
    left: 632px;
    width: 1px;
    background-color: #999;
}

/* scroll bars */
.vscroll {
    display: flex;
    flex-direction: column;
    width: 21px;
    padding: 2px 3px 0;
}

.vscroll button {
    height: 16px;
    border: 1px solid #ababab;
    background-color: #fff;
}

.track {
    flex: 1;
    background-color: #dadada;
}

.thumb {
    border: 1px solid #ababab;
    background-color: #fff;
}

.vscroll .thumb {
    height: 83%;
}

.hscroll {
    display: flex;
    width: 730px;
    height: 16px;
    margin-right: 21px;
}

.hscroll button {
    width: 15px;
    border: 1px solid #ababab;
    background-color: #fff;
}

.hscroll .thumb {
    width: 96%;
    height: 16px;
}

.side {
    border: 4px solid transparent;
    border-left: 5px solid #666;
    border-right: 0;
}

.side.left {
    border-left: 0;
    border-right: 5px solid #666;
}

/* sheet tabs */
.tabs {
    display: flex;
    flex: none;
    align-items: center;
    height: 28px;
    border-bottom: 1px solid #c6c6c6;
}

.arrows {
    display: flex;
    gap: 24px;
    width: 100px;
    padding-left: 27px;
}

.arrows i {
    border: 4px solid transparent;
    border-right: 5px solid #c0c0c0;
    border-left: 0;
}

.arrows .next {
    border-right: 0;
    border-left: 5px solid #c0c0c0;
}

.months {
    display: flex;
    align-self: flex-start;
    border-left: 1px solid #999;
}

.months button {
    width: 45px;
    height: 23px;
    padding-bottom: 2px;
    border-right: 1px solid #999;
    color: #444;
    font-size: 13px;
}

.months .wide {
    width: 53px;
}

.months .current {
    height: 25px;
    margin-top: -1px;
    border-bottom: 2px solid #217346;
    background-color: #fff;
    color: #217346;
}

.add {
    margin-left: 32px;
}

.tabs .dots {
    margin-left: auto;
}

/* status bar */
.status {
    display: flex;
    flex: none;
    align-items: center;
    height: 22px;
    border-bottom: 1px solid #a9bfb6;
    background-color: #f3f3f3;
}

.status span {
    margin-right: 17px;
    padding-bottom: 2px;
}

.status .ready {
    margin: 0 auto 0 7px;
}

.views {
    display: flex;
    align-self: stretch;
    margin-right: 1px;
}

.views button {
    width: 38px;
}

.views .on {
    background-color: #c6c6c6;
}

.zoom-step {
    width: 13px;
    color: #555;
    font-size: 14px;
    font-weight: bold;
}

.status input {
    appearance: none;
    width: 101px;
    height: 12px;
    background: linear-gradient(#aaa, #aaa) center / 100% 1px no-repeat;
}

.status input::-webkit-slider-thumb {
    appearance: none;
    width: 5px;
    height: 11px;
    background-color: #666;
}

.status .percent {
    margin: 0 9px 0 8px;
}

/* taskbar */
.taskbar {
    display: grid;
    grid-template-columns: 1fr auto 1fr;
    flex: none;
    align-items: center;
    height: 47px;
    padding-bottom: 1px;
    background-color: #c9ede0;
}

.weather {
    display: flex;
    gap: 6px;
    padding-left: 18px;
}

.apps {
    display: flex;
    align-items: center;
}

.apps button {
    position: relative;
    width: 44px;
    height: 40px;
}

.run::after {
    content: "";
    position: absolute;
    bottom: 0;
    left: 19px;
    width: 6px;
    height: 3px;
    border-radius: 2px;
    background-color: #7c8c86;
}

.apps .front {
    width: 38px;
    margin: 0 3px;
    border: 1px solid #d6efe6;
    border-radius: 4px;
    background-color: #e4f5ef;
}

.front::after {
    left: 10px;
    width: 16px;
    background-color: #0b78dc;
}

.search {
    display: flex;
    align-items: center;
    width: 218px;
    height: 31px;
    margin: 0 3px;
    padding: 0 4px 0 11px;
    border: 1px solid #b4d4c9;
    border-radius: 16px;
    background-color: #ecf8f4;
    font-size: 14px;
}

.search input {
    flex: 1;
    min-width: 0;
    margin-left: 10px;
}

.search input::placeholder {
    color: #555;
}

.tray {
    display: flex;
    align-items: center;
    justify-content: flex-end;
    padding-right: 18px;
    color: #222;
}

.tray svg {
    margin-right: 8px;
}

.tray svg:first-child {
    margin-right: 17px;
}

.tray .sync {
    margin-right: 4px;
}

.ime {
    width: 38px;
    font-size: 15px;
    text-align: center;
}

.tray .net {
    margin-left: 11px;
}

.tray time {
    margin-left: 5px;
    text-align: right;
}
```
FILE: script.js
```javascript
const TOTAL_DAYS = 30;
const days = 'Sun Mon Tue Wed Thu Fri Sat'.split(' ');
const holidays = [10, 11, 12, 15];
const forecast = ('67/21 189/38 176/22 240/58 240/44 86/13 177/132 194/129 86/9 126/10 107/17 140/34 153/14 160/3 168/3 ' +
    '167/24 121/8 74/17 110/30 113/41 90/46 102/49 280/249 281/237 281/234 257/222 138/57 86/32 57/8 105/52').split(' ');

// row, name, id, position, phone, remark, OT, AL, new OT, new AL, shifts (* = has a comment)
const manager = [
    [6, 'Lilith Zhong 钟晨晨', '000055', 'AFOM', '17784914220', 'AFOM', '39.5', '6.38', '69.5', '8', 'CL G G G G G O O O O D D D A D A O O O O O G G D D A G CL CL G']
];

const gsm = [
    [8, 'Amy Chen 陈孔燕', '000027', 'GSM', '17889722570', 'GSM', '22.5', '7.09', '62.5', '7.5', 'B B C C O O A A B B PH E E O O PH A A A B B C C O O A B B B B'],
    [9, 'Henry Xie 谢沃明', '000171', 'GSM', '15812907630', 'GSM', '22', '2.29', '37.5', '4', 'C C O O A A B B C C E PH PH O O PH B B B C C O O B B B C C O O'],
    [10, 'Belinda Wang 王萍', '000108', 'GSS', '18212873443', 'GSS TF GSM', '1', '4.44', '17', '6', 'A A B B C C O O A A B B B B B B O C C O O A A O D O* A A C C'],
    [11, 'Django Peng 彭琨皓', '000245', 'GSM', '17623623040', 'GSM', '0', '4.32', '16', '5.5', 'O O A A B B C C O O PH PH PH E E E E O O A A B B C C C O O A A']
];

const desk = [
    [14, 'Lven Ding 丁相斌', '000277', 'GSA', '18501377720', 'GSA', '0', '2.44', '16', '4', 'B B O A A A B O O B B B B C C C O O B B B B B B O O A A A A'],
    [15, 'Winni Wang 王晶晶', '000308', 'GSA', '16684731209', 'GSA<br>Buddy-Lven', '0', '0.12', '0', '0', 'O O O A A A B B B B PH PH PH O O PH O F A F F F A O O O A F F F'],
    [16, 'Alice Zhu 朱春艳', '000273', 'GSA', '19110882240', 'GSA', '0', '2.68', '16', '4', 'A A A F F B O C C C PH PH A D D A B O O O O A A A D A C C O O'],
    [17, 'Kimi Yuan 袁宇嵘鸣', '000285', 'Trainee', '15180859212', 'Trainee', '0', '0', '16', '0', 'O B C C C O A A A A C C PH O O* PH* O* B B C C C O O B B B B C C'],
    [18, 'Lena Tan 谭玲丽', '000279', 'Trainee', '19117661732', 'Trainee', '0', '0', '0', '0', 'C C O O O B B B B B C C C O O PH D A A A A O B F B B B O* O* O*'],
    [19, 'Ethan Zhao 赵梓淇', '000036', 'CON', '15521010536', 'CON', '2', '2.25', '8', '3.5', 'O A B B B C C O O A A A PH B B B C C C O O O C C C C O O B B'],
    [20, 'Janet Lu 卢雨竹', '', 'Trainee', '', 'Trainee', '0', '0', '0', '0', 'F F F O O A A F F O D D D A A D A']
];

function addCell(row, html, className, tag = 'td') {
    const cell = document.createElement(tag);
    cell.className = className;
    cell.innerHTML = html;
    row.appendChild(cell);
    return cell;
}

function addOutside(row) {
    addCell(row, '', 'out an');
    addCell(row, '', 'out');
}

function columnName(n) {
    return n < 26 ? String.fromCharCode(65 + n) : 'A' + String.fromCharCode(39 + n);
}

function fillHeader() {
    const letters = document.getElementById('letters');
    for (let i = 0; i < 40; i++) {
        addCell(letters, columnName(i), '', 'th');
    }
    addCell(letters, '', '', 'th');

    const dayRow = document.getElementById('days');
    const dateRow = document.getElementById('dates');
    const roomRow = document.getElementById('forecast');
    for (let i = 0; i < TOTAL_DAYS; i++) {
        // the month starts on Sunday 21-Sep
        const weekday = i % 7;
        const colour = holidays.includes(i) ? ' holiday' : (weekday === 0 || weekday === 6) ? ' weekend' : '';
        addCell(dayRow, days[weekday], 'day' + colour);
        addCell(dateRow, i < 10 ? (21 + i) + '-Sep' : (i - 9) + '-Oct', 'date' + colour);
        addCell(roomRow, forecast[i], 'rooms');
    }
    [dayRow, dateRow, roomRow].forEach(addOutside);
}

function fillStaff(id, list) {
    const body = document.getElementById(id);
    for (const [no, name, staffId, position, phone, remark, ot, al, newOt, newAl, shifts] of list) {
        const row = document.createElement('tr');
        row.className = 'r' + no;
        addCell(row, no, '', 'th');
        addCell(row, name, no === 20 ? 'name strong' : 'name');
        addCell(row, staffId, '');
        addCell(row, position, '');
        addCell(row, phone, '');
        addCell(row, remark, remark.includes('<br>') ? 'role two' : 'role');
        addCell(row, ot, 'num');
        addCell(row, al, 'num');
        addCell(row, newOt, 'num red');
        addCell(row, newAl, 'num red');

        const codes = shifts.split(' ');
        for (const code of codes) {
            const shift = code.replace('*', '');
            addCell(row, shift, 'shift ' + shift + (code.endsWith('*') ? ' note' : ''));
        }
        if (codes.length < TOTAL_DAYS) {
            addCell(row, '', '').colSpan = TOTAL_DAYS - codes.length;
        }
        addOutside(row);
        body.appendChild(row);
    }
}

fillHeader();
fillStaff('manager', manager);
fillStaff('gsm', gsm);
fillStaff('desk', desk);
```
